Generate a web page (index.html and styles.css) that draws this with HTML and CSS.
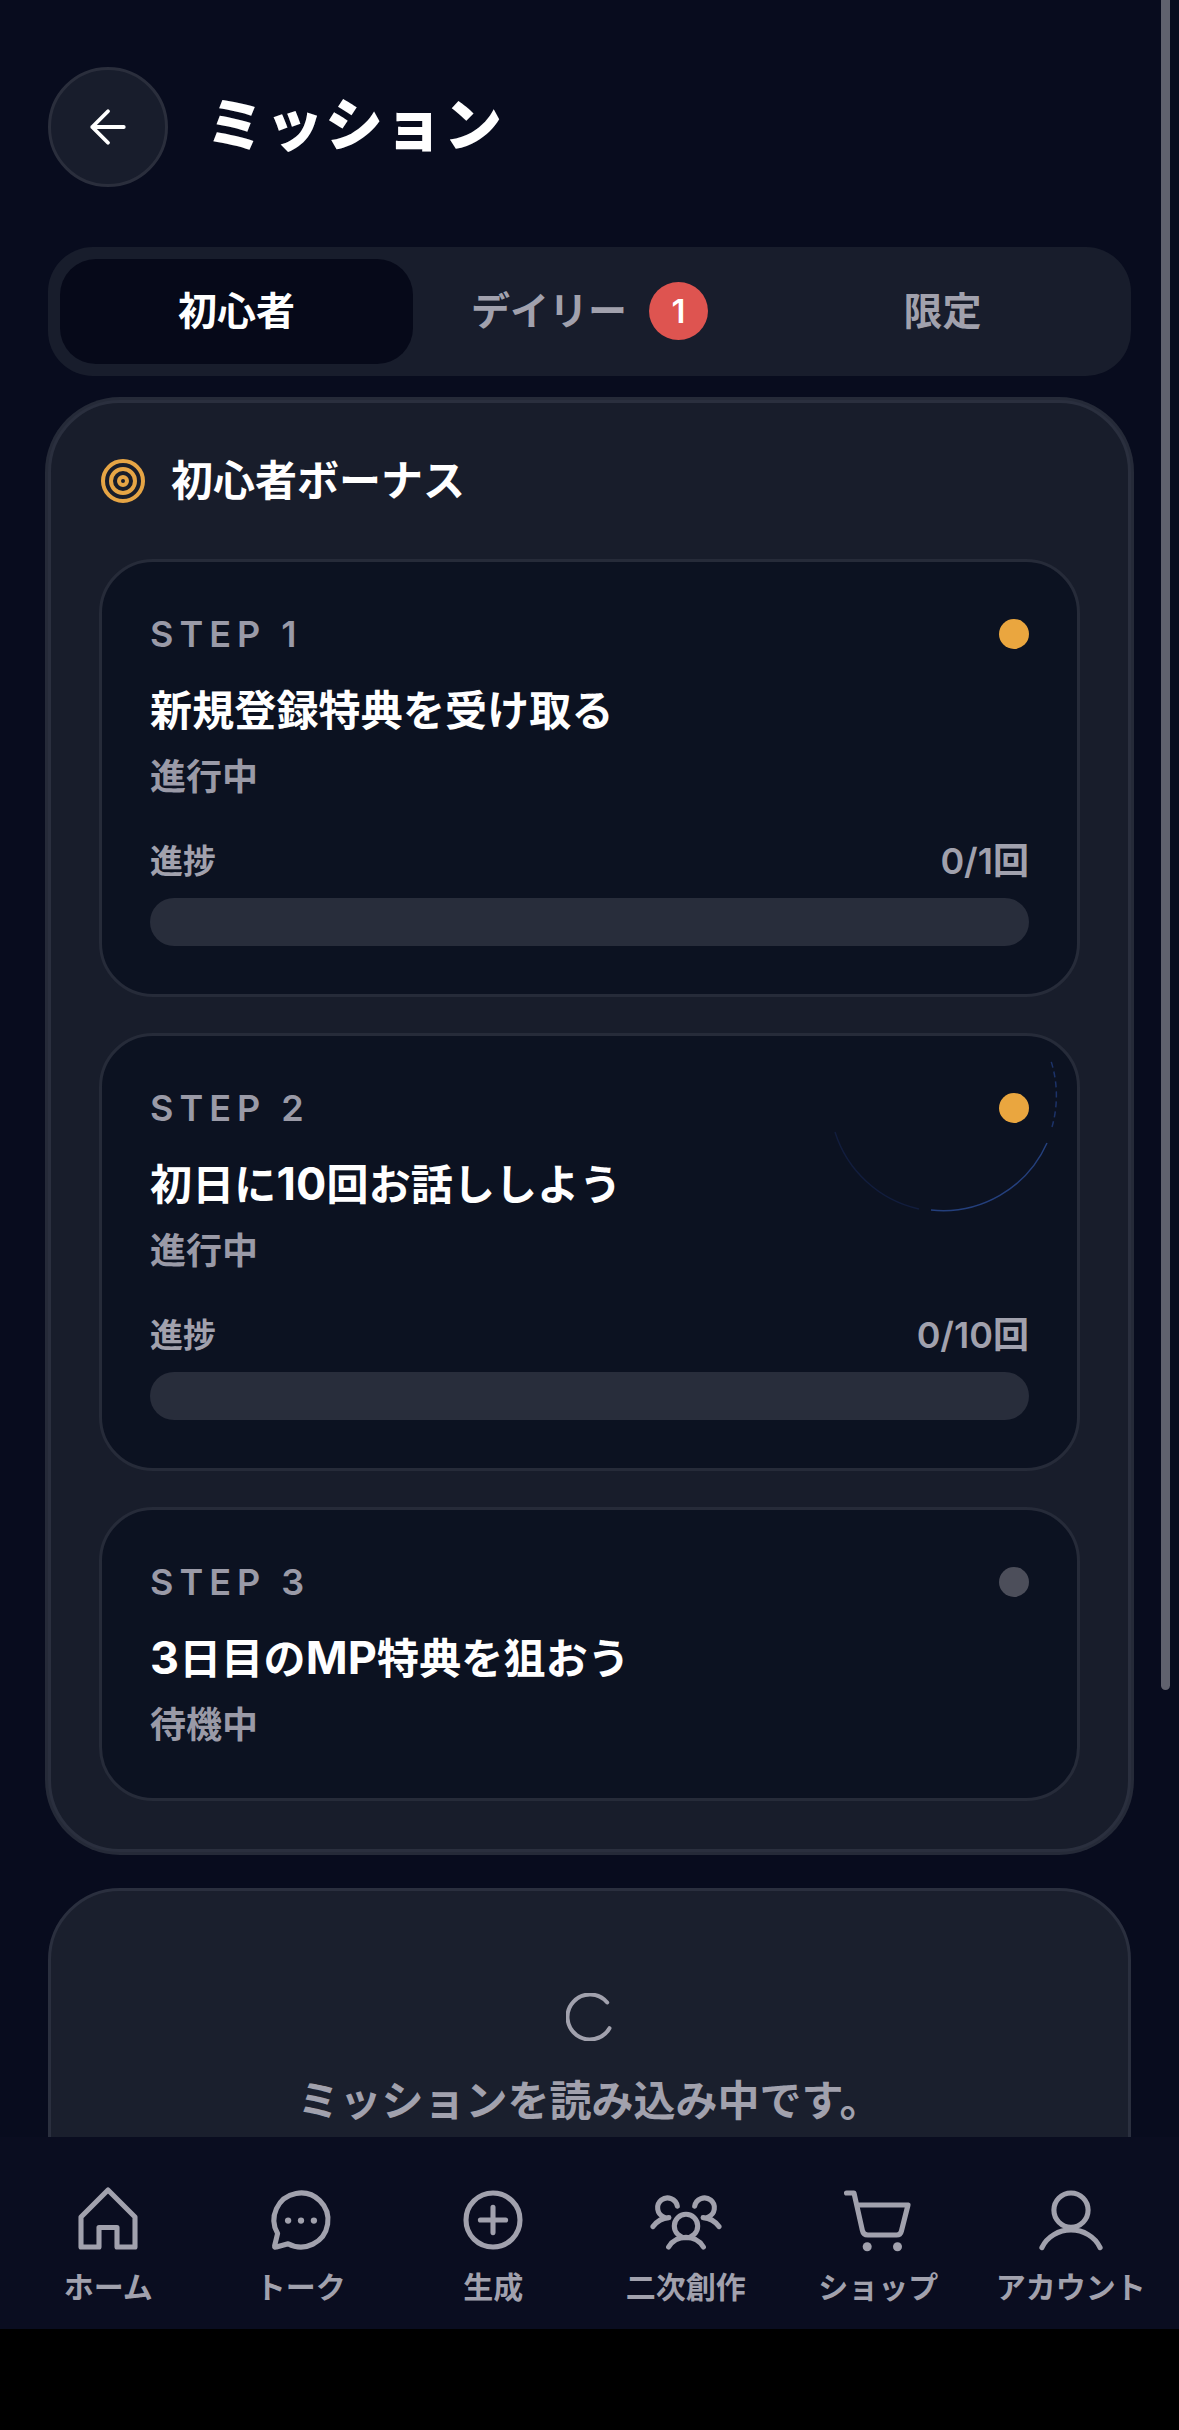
FILE: index.html
```html
<!DOCTYPE html>
<html lang="ja">
<head>
<meta charset="utf-8">
<title>ミッション</title>
<link rel="stylesheet" href="styles.css">
</head>
<body>
<div class="screen">
  <main class="main">
    <header class="header">
      <button class="back" aria-label="戻る">
        <svg class="back-icon" viewBox="0 0 24 24"><path d="M19 12H5M12 19l-7-7 7-7"/></svg>
      </button>
      <h1 class="page-title">ミッション</h1>
    </header>

    <nav class="tabs">
      <div class="tab tab-active"><span class="tab-label">初心者</span></div>
      <div class="tab"><span class="tab-label">デイリー</span><span class="badge">1</span></div>
      <div class="tab"><span class="tab-label">限定</span></div>
    </nav>

    <section class="panel">
      <div class="panel-head">
        <svg class="target" viewBox="0 0 24 24"><circle cx="12" cy="12" r="10"/><circle cx="12" cy="12" r="6"/><circle cx="12" cy="12" r="2"/></svg>
        <h2 class="panel-title">初心者ボーナス</h2>
      </div>

      <article class="card">
        <div class="step-row"><span class="step">STEP 1</span><span class="dot"></span></div>
        <h3 class="card-title">新規登録特典を受け取る</h3>
        <p class="status">進行中</p>
        <div class="progress-row"><span>進捗</span><span class="progress-value">0/1回</span></div>
        <div class="bar"></div>
      </article>

      <article class="card">
        <svg class="ripple" viewBox="0 0 240 240">
          <path class="ripple-faint" d="M12 155A114 114 0 0 0 96 232"/>
          <path class="ripple-mid" d="M108 233A114 114 0 0 0 224 166"/>
          <path class="ripple-dash" d="M229 150A114 114 0 0 0 228 84"/>
        </svg>
        <div class="step-row"><span class="step">STEP 2</span><span class="dot"></span></div>
        <h3 class="card-title">初日に<span class="latin">10</span>回お話ししよう</h3>
        <p class="status">進行中</p>
        <div class="progress-row"><span>進捗</span><span class="progress-value">0/10回</span></div>
        <div class="bar"></div>
      </article>

      <article class="card">
        <div class="step-row"><span class="step">STEP 3</span><span class="dot dot-idle"></span></div>
        <h3 class="card-title"><span class="latin">3</span>日目の<span class="latin">MP</span>特典を狙おう</h3>
        <p class="status">待機中</p>
      </article>
    </section>

    <section class="loading">
      <svg class="spinner" viewBox="0 0 48 48"><path d="M41.2 9.500A22.500 22.500 0 1 0 43.500 35.200"/></svg>
      <p class="loading-text">ミッションを読み込み中です。</p>
    </section>
  </main>

  <nav class="bottom-nav">
    <a class="nav-item">
      <svg class="nav-icon" viewBox="0 0 24 24"><path d="M3 21V11L12 2l9 9v10h-6v-6.500H9V21z"/></svg>
      <span>ホーム</span>
    </a>
    <a class="nav-item">
      <svg class="nav-icon" viewBox="0 0 24 24"><path d="M4.200 16.500 3.200 20.600Q3.100 21.300 3.800 21L7.700 19.900A9 9 0 1 0 4.200 16.500Z"/><circle class="fill" cx="7.700" cy="12.200" r="1.050"/><circle class="fill" cx="12" cy="12.200" r="1.050"/><circle class="fill" cx="16.300" cy="12.200" r="1.050"/></svg>
      <span>トーク</span>
    </a>
    <a class="nav-item">
      <svg class="nav-icon" viewBox="0 0 24 24"><circle cx="12" cy="12" r="9"/><path d="M12 7.800v8.400M7.800 12h8.400"/></svg>
      <span>生成</span>
    </a>
    <a class="nav-item">
      <svg class="nav-icon" viewBox="0 0 24 24"><circle cx="12" cy="14" r="3.900"/><path d="M6.200 21C7.500 18.800 9.600 17.800 12 17.800s4.500 1 5.800 3.200"/><path d="M9.100 7.400A3.300 3.300 0 1 0 4.600 11"/><path d="M6.300 11.200C4 11.300 2.300 12.400 1 14.200"/><path d="M14.900 7.400A3.300 3.300 0 1 1 19.400 11"/><path d="M17.700 11.200C20 11.300 21.700 12.400 23 14.200"/></svg>
      <span>二次創作</span>
    </a>
    <a class="nav-item">
      <svg class="nav-icon" viewBox="0 0 24 24"><path d="M1.500 3H4L6.800 15.500Q7.100 17 8.600 17H18.200Q19.500 17 19.800 15.700L22 7H5"/><circle class="fill" cx="8.400" cy="20.900" r="1.500"/><circle class="fill" cx="18.500" cy="20.900" r="1.500"/></svg>
      <span>ショップ</span>
    </a>
    <a class="nav-item">
      <svg class="nav-icon" viewBox="0 0 24 24"><circle cx="12" cy="8.700" r="5.700"/><path d="M2.300 21.200C4 17.500 8 15.300 12 15.300s8 2.200 9.700 5.900"/></svg>
      <span>アカウント</span>
    </a>
  </nav>
  <div class="system-bar"></div>
  <div class="scrollbar"></div>
</div>
</body>
</html>
```

FILE: styles.css
```css
* { box-sizing: border-box; }
html, body { margin: 0; padding: 0; background: #000; }
body { font-family: "Inter", "Noto Sans CJK JP", sans-serif; color: #fff; }
h1, h2, h3, p { margin: 0; }

.screen { position: relative; width: 1179px; height: 2430px; display: flex; flex-direction: column; overflow: hidden; }
.main { height: 2137px; flex: none; overflow: hidden; padding: 67px 48px 0; background: #080c1e; }

.header { display: flex; align-items: center; gap: 38px; height: 120px; }
.back { width: 120px; height: 120px; flex: none; padding: 0; border-radius: 50%; border: 3px solid #2a2e3c; background: #181d2c; display: flex; align-items: center; justify-content: center; }
.back-icon { width: 54px; height: 54px; fill: none; stroke: #fff; stroke-width: 1.700; stroke-linecap: round; stroke-linejoin: round; }
.page-title { font-size: 58px; line-height: 72px; font-weight: 900; letter-spacing: 1.500px; margin-top: -5px; }

.tabs { display: flex; margin-top: 60px; height: 129px; padding: 12px; border-radius: 45px; background: #181d2c; }
.tab { flex: 1; display: flex; align-items: center; justify-content: center; gap: 22px; border-radius: 36px; font-size: 39px; font-weight: 700; color: #a1a1ad; }
.tab-label { margin-bottom: 8px; }
.tab-active { background: #060919; color: #fff; }
.badge { width: 59px; height: 58px; margin-bottom: 1px; border-radius: 50%; background: #de5450; color: #fff; font-size: 33px; font-weight: 600; display: flex; align-items: center; justify-content: center; }

.panel { margin-top: 24px; padding: 48px; border: 3px solid #2a2f3e; border-radius: 72px; background: #181d2b; box-shadow: 0 0 0 3px #252a38; }
.panel-head { display: flex; align-items: center; gap: 24px; height: 60px; margin-bottom: 48px; }
.target { width: 48px; height: 48px; flex: none; fill: none; stroke: #e6a545; stroke-width: 2; }
.panel-title { font-size: 42px; line-height: 60px; font-weight: 700; }

.card { position: relative; overflow: hidden; padding: 48px; border: 3px solid #262b39; border-radius: 54px; background: #0c1221; }
.card + .card { margin-top: 36px; }
.step-row { display: flex; align-items: center; justify-content: space-between; height: 48px; }
.step { font-size: 36px; font-weight: 600; letter-spacing: 6px; color: #9a9aa7; }
.dot { width: 30px; height: 30px; border-radius: 50%; background: #eaa63f; }
.dot-idle { background: #4c4e5a; }
.card-title { margin-top: 23px; font-size: 42px; line-height: 60px; font-weight: 700; letter-spacing: .15px; }
.latin { font-size: 45px; line-height: 1; }
.status { margin-top: 11px; font-size: 36px; line-height: 50px; font-weight: 700; color: #9a9aa7; }
.progress-row { display: flex; justify-content: space-between; align-items: center; margin-top: 38px; height: 42px; font-size: 33px; line-height: 40px; font-weight: 600; color: #a1a1ad; }
.progress-value { font-size: 36px; }
.bar { margin-top: 16px; height: 48px; border-radius: 24px; background: #282d3b; }

.ripple { position: absolute; top: -59px; right: 14px; width: 240px; height: 240px; fill: none; stroke-width: 1.500; }
.ripple-faint { stroke: #121d3d; }
.ripple-mid { stroke: #243f7c; }
.ripple-dash { stroke: #1c3268; stroke-dasharray: 6 4; }

.loading { margin-top: 36px; height: 400px; padding-top: 102px; display: flex; flex-direction: column; align-items: center; border: 3px solid #2a2f3e; border-radius: 72px; background: #1a1f2d; }
.spinner { width: 48px; height: 48px; flex: none; fill: none; stroke: #a1a1ad; stroke-width: 4; stroke-linecap: round; }
.loading-text { margin-top: 30px; font-size: 42px; line-height: 60px; font-weight: 700; color: #a1a1ad; }

.bottom-nav { height: 192px; flex: none; padding: 47px 12px 0; display: grid; grid-template-columns: repeat(6, 1fr); background: #0a0d20; }
.nav-item { display: flex; flex-direction: column; align-items: center; color: #a1a1ad; font-size: 30px; font-weight: 600; line-height: 42px; white-space: nowrap; }
.nav-icon { width: 72px; height: 72px; flex: none; fill: none; stroke: currentColor; stroke-width: 1.700; stroke-linecap: round; stroke-linejoin: round; margin-bottom: 10px; }
.nav-icon .fill { fill: currentColor; stroke: none; }

.system-bar { flex: 1; background: #000; }
.scrollbar { position: absolute; top: 0; right: 9px; width: 9px; height: 1690px; border-radius: 0 0 5px 5px; background: #60626e; }
```
